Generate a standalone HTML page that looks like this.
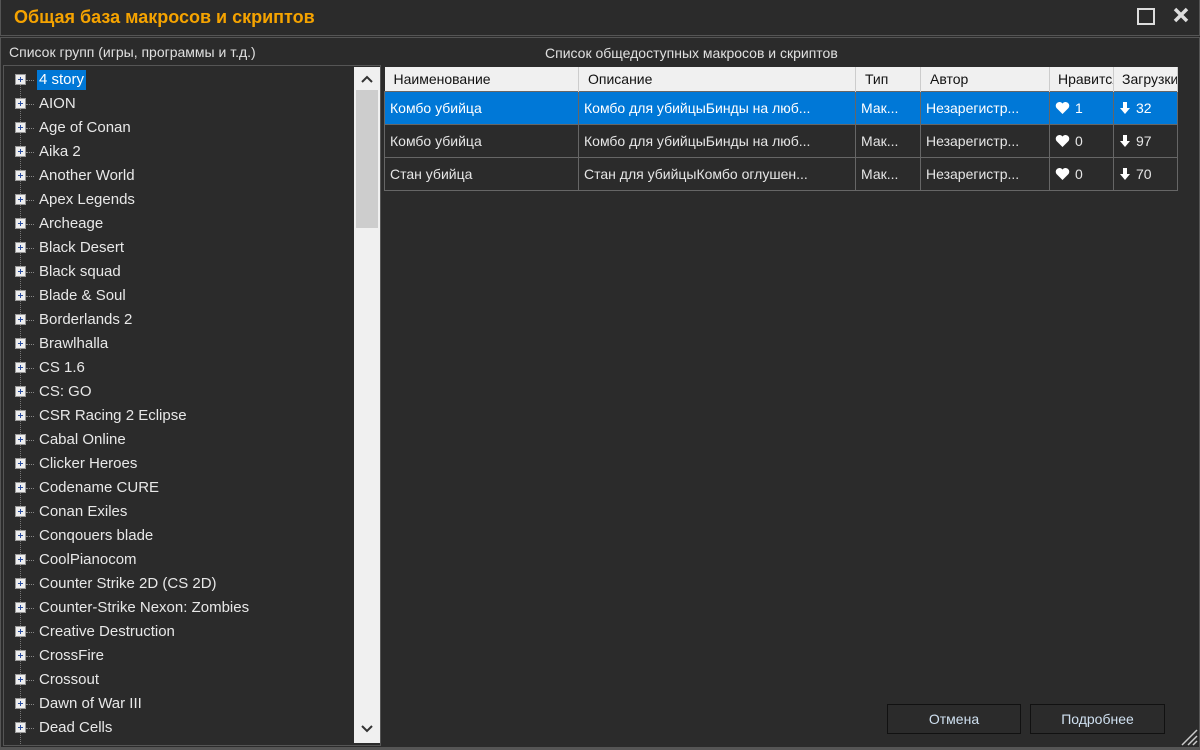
<!DOCTYPE html>
<html><head><meta charset="utf-8"><style>
*{margin:0;padding:0;box-sizing:border-box}
body{width:1200px;height:750px;background:#2b2b2b;font-family:"Liberation Sans",sans-serif;position:relative;overflow:hidden;color:#e6e6e6}
.abs{position:absolute}
#title{left:0;top:0;width:1200px;height:36px;border:1px solid #555;border-top:none;background:#2b2b2b}
#title span{position:absolute;left:13px;top:7px;color:#f5a300;font-weight:bold;font-size:18px}
#main{left:0;top:37px;width:1200px;height:713px;border:1px solid #555;border-bottom:3px solid #555}
.lbl{font-size:14px;color:#e0e0e0;white-space:nowrap}
#tree{left:3px;top:65px;width:378px;height:681px;border:1px solid #555;background:#2b2b2b;overflow:hidden}
.it{position:absolute;left:0;width:350px;height:24px;font-size:15px;color:#e8e8e8;white-space:nowrap}
.it .b{position:absolute;left:11px;top:6px;width:11px;height:11px;background:#eee;border:1px solid #999}
.it .b:before{content:"";position:absolute;left:2px;top:4px;width:5px;height:1px;background:#2a4ea0}
.it .b:after{content:"";position:absolute;left:4px;top:2px;width:1px;height:5px;background:#2a4ea0}
.it .d{position:absolute;left:22px;top:12px;width:8px;border-top:1px dotted #888}
.it .t{position:absolute;left:33px;top:2px;padding:0 2px;line-height:20px;white-space:nowrap}
.vl{position:absolute;left:16px;top:14px;width:0;border-left:1px dotted #777;height:680px}
#sb{left:354px;top:67px;width:26px;height:676px;background:#f0f0f0}
#thumb{left:356px;top:90px;width:22px;height:138px;background:#cdcdcd}
table{position:absolute;left:384px;top:67px;border-collapse:collapse;font-size:14px;table-layout:fixed;width:793px}
th{background:#f0f0f0;color:#111;font-weight:normal;text-align:left;height:24px;padding-left:9px;border-right:1px solid #ccc;white-space:nowrap;overflow:hidden}
td{height:33px;border:1px solid #666;padding-left:5px;white-space:nowrap;overflow:hidden;color:#e6e6e6}
tr.sel td{background:#0078d7;color:#fff}
.btn{top:704px;height:30px;border:1px solid #111;background:#2b2b2b;color:#cfe0f0;font-size:14px;text-align:center;line-height:28px}
.ic{display:inline-block;vertical-align:-2px;margin-right:5px}
</style></head><body>
<div id="title" class="abs"><span>Общая база макросов и скриптов</span>
<div class="abs" style="left:1136px;top:8px;width:18px;height:17px;border:2px solid #ddd"></div>
<svg class="abs" style="left:1172px;top:7px" width="16" height="16"><path d="M2 2L14 14M14 2L2 14" stroke="#ddd" stroke-width="3.5"/></svg>
</div>
<div id="main" class="abs"></div>
<div class="abs lbl" style="left:9px;top:44px">Список групп (игры, программы и т.д.)</div>
<div class="abs lbl" style="left:545px;top:45px">Список общедоступных макросов и скриптов</div>
<div id="tree" class="abs"><div class="vl"></div>
<div class="it" style="top:2px"><div class="b"></div><div class="d"></div><div class="t" style="background:#0078d7;color:#fff">4 story</div></div>
<div class="it" style="top:26px"><div class="b"></div><div class="d"></div><div class="t">AION</div></div>
<div class="it" style="top:50px"><div class="b"></div><div class="d"></div><div class="t">Age of Conan</div></div>
<div class="it" style="top:74px"><div class="b"></div><div class="d"></div><div class="t">Aika 2</div></div>
<div class="it" style="top:98px"><div class="b"></div><div class="d"></div><div class="t">Another World</div></div>
<div class="it" style="top:122px"><div class="b"></div><div class="d"></div><div class="t">Apex Legends</div></div>
<div class="it" style="top:146px"><div class="b"></div><div class="d"></div><div class="t">Archeage</div></div>
<div class="it" style="top:170px"><div class="b"></div><div class="d"></div><div class="t">Black Desert</div></div>
<div class="it" style="top:194px"><div class="b"></div><div class="d"></div><div class="t">Black squad</div></div>
<div class="it" style="top:218px"><div class="b"></div><div class="d"></div><div class="t">Blade &amp; Soul</div></div>
<div class="it" style="top:242px"><div class="b"></div><div class="d"></div><div class="t">Borderlands 2</div></div>
<div class="it" style="top:266px"><div class="b"></div><div class="d"></div><div class="t">Brawlhalla</div></div>
<div class="it" style="top:290px"><div class="b"></div><div class="d"></div><div class="t">CS 1.6</div></div>
<div class="it" style="top:314px"><div class="b"></div><div class="d"></div><div class="t">CS: GO</div></div>
<div class="it" style="top:338px"><div class="b"></div><div class="d"></div><div class="t">CSR Racing 2 Eclipse</div></div>
<div class="it" style="top:362px"><div class="b"></div><div class="d"></div><div class="t">Cabal Online</div></div>
<div class="it" style="top:386px"><div class="b"></div><div class="d"></div><div class="t">Clicker Heroes</div></div>
<div class="it" style="top:410px"><div class="b"></div><div class="d"></div><div class="t">Codename CURE</div></div>
<div class="it" style="top:434px"><div class="b"></div><div class="d"></div><div class="t">Conan Exiles</div></div>
<div class="it" style="top:458px"><div class="b"></div><div class="d"></div><div class="t">Conqouers blade</div></div>
<div class="it" style="top:482px"><div class="b"></div><div class="d"></div><div class="t">CoolPianocom</div></div>
<div class="it" style="top:506px"><div class="b"></div><div class="d"></div><div class="t">Counter Strike 2D (CS 2D)</div></div>
<div class="it" style="top:530px"><div class="b"></div><div class="d"></div><div class="t">Counter-Strike Nexon: Zombies</div></div>
<div class="it" style="top:554px"><div class="b"></div><div class="d"></div><div class="t">Creative Destruction</div></div>
<div class="it" style="top:578px"><div class="b"></div><div class="d"></div><div class="t">CrossFire</div></div>
<div class="it" style="top:602px"><div class="b"></div><div class="d"></div><div class="t">Crossout</div></div>
<div class="it" style="top:626px"><div class="b"></div><div class="d"></div><div class="t">Dawn of War III</div></div>
<div class="it" style="top:650px"><div class="b"></div><div class="d"></div><div class="t">Dead Cells</div></div>
</div>
<div id="sb" class="abs"></div><div id="thumb" class="abs"></div>
<svg class="abs" style="left:361px;top:75px" width="12" height="8"><path d="M1 7L6 2L11 7" stroke="#333" stroke-width="2" fill="none"/></svg>
<svg class="abs" style="left:361px;top:725px" width="12" height="8"><path d="M1 1L6 6L11 1" stroke="#333" stroke-width="2" fill="none"/></svg>
<table>
<colgroup><col style="width:194px"><col style="width:277px"><col style="width:65px"><col style="width:129px"><col style="width:64px"><col style="width:64px"></colgroup>
<tr><th>Наименование</th><th>Описание</th><th>Тип</th><th>Автор</th><th style="padding-left:8px">Нравится</th><th style="padding-left:8px">Загрузки</th></tr>
<tr class="sel"><td>Комбо убийца</td><td>Комбо для убийцыБинды на люб...</td><td>Мак...</td><td>Незарегистр...</td><td><svg class="ic" width="15" height="14"><path d="M7.5 13L1.5 7A3.5 3.5 0 0 1 7.5 2.5A3.5 3.5 0 0 1 13.5 7Z" fill="#fff"/></svg>1</td><td><svg class="ic" width="12" height="14"><path d="M4 1H8V7H11L6 13L1 7H4Z" fill="#fff"/></svg>32</td></tr>
<tr><td>Комбо убийца</td><td>Комбо для убийцыБинды на люб...</td><td>Мак...</td><td>Незарегистр...</td><td><svg class="ic" width="15" height="14"><path d="M7.5 13L1.5 7A3.5 3.5 0 0 1 7.5 2.5A3.5 3.5 0 0 1 13.5 7Z" fill="#fff"/></svg>0</td><td><svg class="ic" width="12" height="14"><path d="M4 1H8V7H11L6 13L1 7H4Z" fill="#fff"/></svg>97</td></tr>
<tr><td>Стан убийца</td><td>Стан для убийцыКомбо оглушен...</td><td>Мак...</td><td>Незарегистр...</td><td><svg class="ic" width="15" height="14"><path d="M7.5 13L1.5 7A3.5 3.5 0 0 1 7.5 2.5A3.5 3.5 0 0 1 13.5 7Z" fill="#fff"/></svg>0</td><td><svg class="ic" width="12" height="14"><path d="M4 1H8V7H11L6 13L1 7H4Z" fill="#fff"/></svg>70</td></tr>
</table>
<div class="abs btn" style="left:887px;width:134px">Отмена</div>
<div class="abs btn" style="left:1030px;width:135px">Подробнее</div>
<svg class="abs" style="left:1180px;top:728px" width="18" height="18"><path d="M2 17L17 2M8 17L17 8M13 17L17 13" stroke="#ccc" stroke-width="1.5"/></svg>
</body></html>
